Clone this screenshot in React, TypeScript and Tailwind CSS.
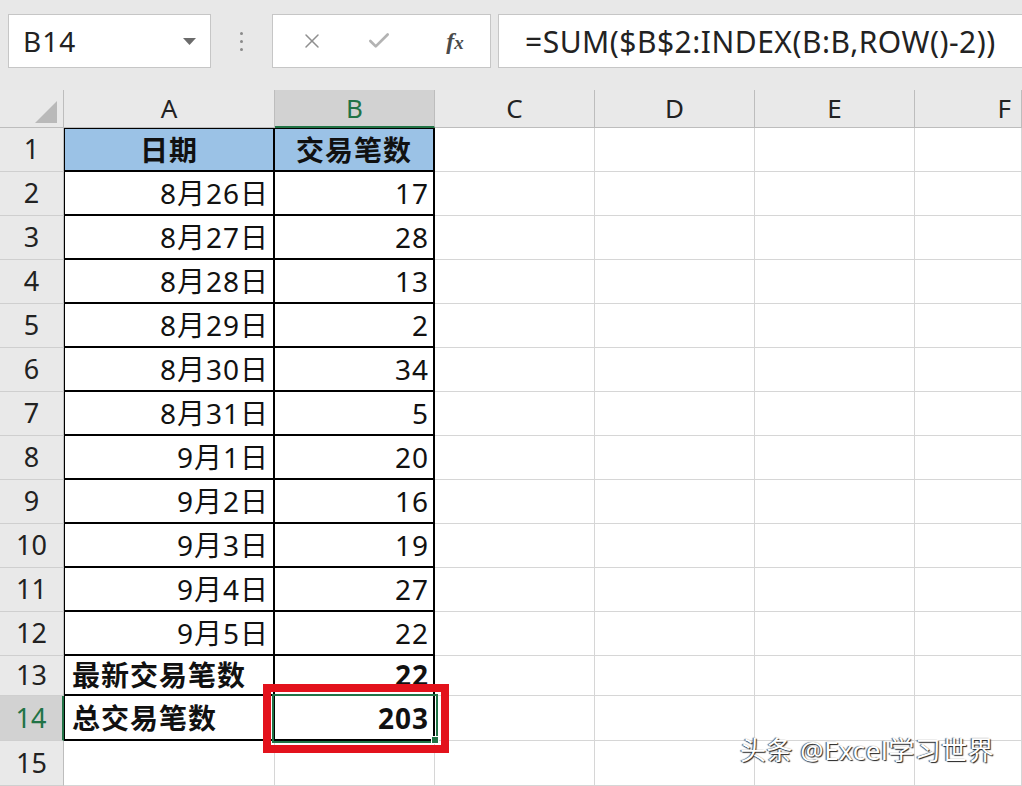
import { X, Check } from 'lucide-react'

type Row = {
  n: number
  a: string
  b: string
  h: string
  kind: 'head' | 'data' | 'total' | 'empty'
}

const ROWS: Row[] = [
  { n: 1, a: '日期', b: '交易笔数', h: 'h-[44px]', kind: 'head' },
  { n: 2, a: '8月26日', b: '17', h: 'h-[44px]', kind: 'data' },
  { n: 3, a: '8月27日', b: '28', h: 'h-[44px]', kind: 'data' },
  { n: 4, a: '8月28日', b: '13', h: 'h-[44px]', kind: 'data' },
  { n: 5, a: '8月29日', b: '2', h: 'h-[44px]', kind: 'data' },
  { n: 6, a: '8月30日', b: '34', h: 'h-[44px]', kind: 'data' },
  { n: 7, a: '8月31日', b: '5', h: 'h-[44px]', kind: 'data' },
  { n: 8, a: '9月1日', b: '20', h: 'h-[44px]', kind: 'data' },
  { n: 9, a: '9月2日', b: '16', h: 'h-[44px]', kind: 'data' },
  { n: 10, a: '9月3日', b: '19', h: 'h-[44px]', kind: 'data' },
  { n: 11, a: '9月4日', b: '27', h: 'h-[44px]', kind: 'data' },
  { n: 12, a: '9月5日', b: '22', h: 'h-[44px]', kind: 'data' },
  { n: 13, a: '最新交易笔数', b: '22', h: 'h-[40px]', kind: 'total' },
  { n: 14, a: '总交易笔数', b: '203', h: 'h-[45px]', kind: 'total' },
  { n: 15, a: '', b: '', h: 'h-[45px]', kind: 'empty' },
]

const EMPTY_COLS = ['C', 'D', 'E', 'F']

function RowHeader({ n }: { n: number }) {
  const active = n === 14
  return (
    <div
      className={`w-[64px] shrink-0 flex items-center justify-center text-[27px] border-b border-[#cfcfcf] ${
        active
          ? 'bg-[#d2d2d2] text-[#217346] border-r-2 border-r-[#217346]'
          : 'bg-[#e9e9e9] text-[#222] border-r border-r-[#bdbdbd]'
      }`}
    >
      {n}
    </div>
  )
}

function SheetRow({ row }: { row: Row }) {
  const table = row.kind !== 'empty'
  const head = row.kind === 'head'
  const bold = row.kind === 'head' || row.kind === 'total'
  const cellBorder = table
    ? `border-r-2 border-b-2 border-black ${head ? 'border-t border-t-black' : ''}`
    : 'border-r border-b border-[#d6d6d6]'

  return (
    <div className={`flex ${row.h}`}>
      <RowHeader n={row.n} />
      <div
        className={`w-[211px] shrink-0 flex items-center tracking-[1px] ${cellBorder} ${table ? 'border-l border-l-black' : ''} ${
          head ? 'bg-[#9bc2e6] justify-center' : row.kind === 'total' ? 'justify-start pl-[7px]' : 'justify-end pr-[4px]'
        } ${bold ? 'font-bold' : ''}`}
      >
        {row.a}
      </div>
      <div
        className={`w-[160px] shrink-0 flex items-center tracking-[1px] ${cellBorder} ${
          head ? 'bg-[#9bc2e6] justify-center' : 'justify-end pr-[4px]'
        } ${bold ? 'font-bold' : ''}`}
      >
        {row.b}
      </div>
      {EMPTY_COLS.map(c => (
        <div key={c} className={`${c === 'F' ? 'w-[107px]' : 'w-[160px]'} shrink-0 border-r border-b border-[#d6d6d6]`} />
      ))}
    </div>
  )
}

export default function App() {
  return (
    <div
      className="relative w-[1022px] h-[786px] overflow-hidden bg-white text-[28px] text-[#111]"
      style={{ fontFamily: '"Noto Sans", "Noto Sans CJK SC", sans-serif' }}
    >
      {/* formula bar */}
      <div className="h-[90px] bg-[#e8e8e8] flex items-start pt-[14px] pl-[8px]">
        <div className="w-[203px] h-[54px] bg-white border border-[#c6c6c6] flex items-center pl-[14px] pr-[14px] justify-between">
          <span className="text-[28px] text-[#222] tracking-[1px]">B14</span>
          <svg width="13" height="8" viewBox="0 0 13 8" className="mt-[2px]">
            <path d="M0 0 L13 0 L6.5 7 Z" fill="#6b6b6b" />
          </svg>
        </div>
        <div className="w-[61px] h-[54px] flex flex-col items-center justify-center gap-[5px]">
          <span className="w-[3px] h-[3px] rounded-full bg-[#8a8a8a]" />
          <span className="w-[3px] h-[3px] rounded-full bg-[#8a8a8a]" />
          <span className="w-[3px] h-[3px] rounded-full bg-[#8a8a8a]" />
        </div>
        <div className="w-[219px] h-[54px] bg-white border border-[#c6c6c6] flex items-center">
          <div className="w-[75px] flex justify-center pl-[3px]">
            <X className="w-[24px] h-[24px] text-[#8f8f8f]" strokeWidth={1.5} />
          </div>
          <div className="w-[62px] flex justify-center">
            <Check className="w-[26px] h-[26px] text-[#b3b3b3]" strokeWidth={2.5} />
          </div>
          <div className="flex-1 flex justify-center pl-[10px]">
            <span className="italic text-[#4a4a4a] text-[24px] font-bold" style={{ fontFamily: '"Liberation Serif", serif' }}>
              f<span className="text-[19px]">x</span>
            </span>
          </div>
        </div>
        <div className="ml-[7px] flex-1 h-[54px] bg-white border border-[#c6c6c6] border-r-0 flex items-center pl-[26px]">
          <span className="text-[30px] text-[#222] tracking-[0.5px]">=SUM($B$2:INDEX(B:B,ROW()-2))</span>
        </div>
      </div>

      {/* column headers */}
      <div className="flex h-[38px] bg-[#e9e9e9] text-[26px] text-[#222]">
        <div className="w-[64px] shrink-0 border-r border-b border-[#bdbdbd] flex items-end justify-end pr-[6px] pb-[4px]">
          <svg width="22" height="22" viewBox="0 0 22 22">
            <path d="M22 0 L22 22 L0 22 Z" fill="#b9b9b9" />
          </svg>
        </div>
        <div className="w-[211px] shrink-0 border-r border-b border-[#bdbdbd] flex items-center justify-center">A</div>
        <div className="w-[160px] shrink-0 bg-[#d2d2d2] text-[#217346] border-r border-r-[#bdbdbd] border-b-2 border-b-[#217346] flex items-center justify-center">
          B
        </div>
        {EMPTY_COLS.map(c => (
          <div
            key={c}
            className={`${c === 'F' ? 'w-[107px] justify-end pr-[10px]' : 'w-[160px] justify-center'} shrink-0 border-r border-b border-[#bdbdbd] flex items-center`}
          >
            {c}
          </div>
        ))}
      </div>

      {/* sheet */}
      {ROWS.map(r => (
        <SheetRow key={r.n} row={r} />
      ))}

      {/* selection on B14 */}
      <div className="absolute left-[272px] top-[694px] w-[166px] h-[49px] border-2 border-[#217346]" />
      <div className="absolute left-[431px] top-[736px] w-[8px] h-[8px] bg-[#217346] border border-white" />

      {/* red callout */}
      <div className="absolute left-[263px] top-[684px] w-[186px] h-[69px] border-[8px] border-[#e3121c]" />

      {/* watermark */}
      <div
        className="absolute left-[740px] top-[731px] text-[26px] text-white tracking-[0.5px]"
        style={{ textShadow: '1px 1px 1px #222, -1px 0 1px #444' }}
      >
        头条 @Excel学习世界
      </div>
    </div>
  )
}
